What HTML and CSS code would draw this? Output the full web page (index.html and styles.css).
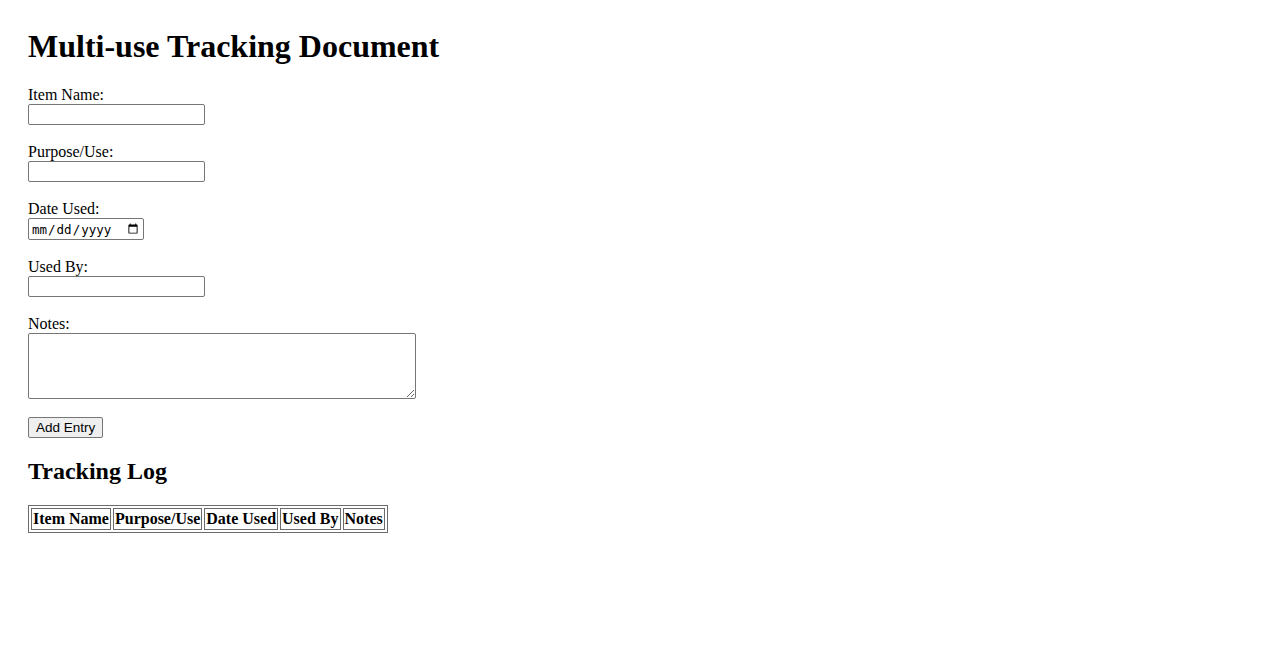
FILE: index.html
```html
<!DOCTYPE html>
<html lang="en">
<head>
  <meta charset="UTF-8">
  <meta name="viewport" content="width=device-width, initial-scale=1.0">
  <title>Multi-use Tracking Document</title>
  <link rel="stylesheet" href="styles.css">
</head>
<body>

<h1>Multi-use Tracking Document</h1>

<form class="entry-form" id="entryForm">
  <div class="field">
    <label for="itemName">Item Name:</label>
    <input type="text" id="itemName" class="text-input">
  </div>
  <div class="field">
    <label for="purpose">Purpose/Use:</label>
    <input type="text" id="purpose" class="text-input">
  </div>
  <div class="field">
    <label for="dateUsed">Date Used:</label>
    <input type="date" id="dateUsed" class="date-input">
  </div>
  <div class="field">
    <label for="usedBy">Used By:</label>
    <input type="text" id="usedBy" class="text-input">
  </div>
  <div class="field">
    <label for="notes">Notes:</label>
    <textarea id="notes" rows="4" cols="50"></textarea>
  </div>
  <div class="field">
    <button type="button" onclick="addEntry()">Add Entry</button>
  </div>
</form>

<h2>Tracking Log</h2>

<table class="log-table" id="logTable">
  <thead>
    <tr>
      <th>Item Name</th>
      <th>Purpose/Use</th>
      <th>Date Used</th>
      <th>Used By</th>
      <th>Notes</th>
    </tr>
  </thead>
  <tbody id="logBody"></tbody>
</table>

<script>
  function addEntry() {
    var fields = ['itemName', 'purpose', 'dateUsed', 'usedBy', 'notes'];
    var row = document.createElement('tr');
    fields.forEach(function (id) {
      var cell = document.createElement('td');
      cell.textContent = document.getElementById(id).value;
      row.appendChild(cell);
    });
    document.getElementById('logBody').appendChild(row);
    document.getElementById('entryForm').reset();
  }
</script>

</body>
</html>
```

FILE: styles.css
```css
body {
  font-family: 'Liberation Serif', 'Times New Roman', serif;
  font-size: 16px;
  margin: 0;
  padding: 28px;
  color: #000;
  background: #fff;
}

h1 {
  font-size: 32px;
  margin: 0 0 21px;
}

h2 {
  font-size: 24px;
  margin: 20px 0;
}

/* Form */
.field {
  display: flex;
  flex-direction: column;
  align-items: flex-start;
  margin-bottom: 18px;
}

.field:last-child {
  margin-bottom: 0;
}

.field label {
  line-height: 18px;
}

.text-input,
.date-input,
textarea {
  box-sizing: border-box;
  border: 1px solid #767676;
  border-radius: 2px;
  padding: 1px 2px;
  margin: 0;
  background: #fff;
}

.text-input {
  width: 177px;
  height: 21px;
}

.date-input {
  width: 116px;
  height: 22px;
  font-family: 'DejaVu Sans Mono', monospace;
  font-size: 12.5px;
}

textarea {
  width: 388px;
  height: 66px;
  resize: vertical;
}

button {
  font-family: 'Liberation Sans', Arial, sans-serif;
  font-size: 13.5px;
  height: 21px;
  padding: 1px 7px;
  background-color: #efefef;
  border: 1px solid #767676;
  border-radius: 2px;
  color: #000;
  cursor: pointer;
}

/* Log table */
.log-table {
  border: 1px solid #6b6b6b;
  border-spacing: 2px;
}

.log-table th,
.log-table td {
  border: 1px solid #6b6b6b;
  padding: 1px;
  line-height: 18px;
}
```
